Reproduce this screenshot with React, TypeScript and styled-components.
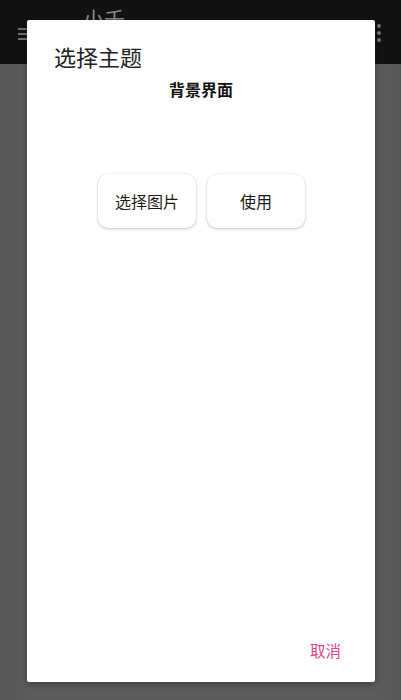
import React from "react";
import styled, { createGlobalStyle } from "styled-components";

const Global = createGlobalStyle`
  html, body {
    margin: 0;
    padding: 0;
    background: #5a5a5a;
  }
  body {
    font-family: Roboto, "Noto Sans CJK SC", "Noto Sans", sans-serif;
  }
`;

const Screen = styled.div`
  position: relative;
  width: 401px;
  height: 700px;
  overflow: hidden;
  display: flex;
  flex-direction: column;
  background: #5a5a5a;
`;

const AppBar = styled.header`
  height: 64px;
  flex: none;
  background: #121212;
  display: flex;
  align-items: flex-start;
  padding: 0 20px 0 18px;
  box-sizing: border-box;
`;

const MenuIcon = styled.div`
  width: 14px;
  display: flex;
  flex-direction: column;
  gap: 3px;
  margin-top: 28px;
  span {
    height: 2px;
    background: #6f6f6f;
  }
`;

const AppTitle = styled.div`
  margin-left: 51px;
  margin-top: 6px;
  font-family: "Noto Sans CJK SC", sans-serif;
  font-size: 21px;
  color: #8a8a8a;
  line-height: 24px;
`;

const Spacer = styled.div`
  flex: 1;
`;

const Dots = styled.div`
  display: flex;
  flex-direction: column;
  gap: 3px;
  margin-top: 24px;
  span {
    width: 4px;
    height: 4px;
    border-radius: 50%;
    background: #777;
  }
`;

const Body = styled.main`
  flex: 1;
  background: linear-gradient(90deg, #555 0%, #5c5c5c 8%, #5c5c5c 92%, #555 100%);
`;

const Dialog = styled.section`
  position: absolute;
  top: 20px;
  left: 27px;
  width: 348px;
  height: 662px;
  background: #fff;
  border-radius: 2px;
  box-shadow: 0 2px 6px rgba(0, 0, 0, 0.35);
  display: flex;
  flex-direction: column;
  box-sizing: border-box;
  font-family: "Noto Sans CJK SC", sans-serif;
`;

const DialogTitle = styled.h2`
  margin: 0;
  padding: 21px 0 0 27px;
  font-size: 22px;
  font-weight: 400;
  line-height: 30px;
  color: #212121;
`;

const SectionLabel = styled.div`
  text-align: center;
  font-size: 16px;
  font-weight: 700;
  color: #111;
  margin-top: 7px;
  line-height: 22px;
`;

const ButtonRow = styled.div`
  display: flex;
  justify-content: center;
  gap: 11px;
  margin-top: 74px;
  padding-left: 1px;
`;

const CardButton = styled.button`
  width: 98px;
  height: 54px;
  border: none;
  border-radius: 10px;
  background: #fff;
  box-shadow: 0 1px 3px rgba(0, 0, 0, 0.22), 0 0 1px rgba(0, 0, 0, 0.12);
  font-family: "Noto Sans CJK SC", sans-serif;
  font-size: 16px;
  color: #1a1a1a;
  cursor: pointer;
  padding: 0;
`;

const Actions = styled.div`
  margin-top: auto;
  display: flex;
  justify-content: flex-end;
  padding: 0 34px 21px 0;
`;

const TextAction = styled.button`
  border: none;
  background: none;
  padding: 0;
  font-family: "Noto Sans CJK SC", sans-serif;
  font-size: 15.5px;
  line-height: 22px;
  color: #e0468a;
  cursor: pointer;
`;

export default function App() {
  return (
    <>
      <Global />
      <Screen>
        <AppBar>
          <MenuIcon>
            <span />
            <span />
            <span />
          </MenuIcon>
          <AppTitle>小千</AppTitle>
          <Spacer />
          <Dots>
            <span />
            <span />
            <span />
          </Dots>
        </AppBar>
        <Body />
        <Dialog>
          <DialogTitle>选择主题</DialogTitle>
          <SectionLabel>背景界面</SectionLabel>
          <ButtonRow>
            <CardButton>选择图片</CardButton>
            <CardButton>使用</CardButton>
          </ButtonRow>
          <Actions>
            <TextAction>取消</TextAction>
          </Actions>
        </Dialog>
      </Screen>
    </>
  );
}
